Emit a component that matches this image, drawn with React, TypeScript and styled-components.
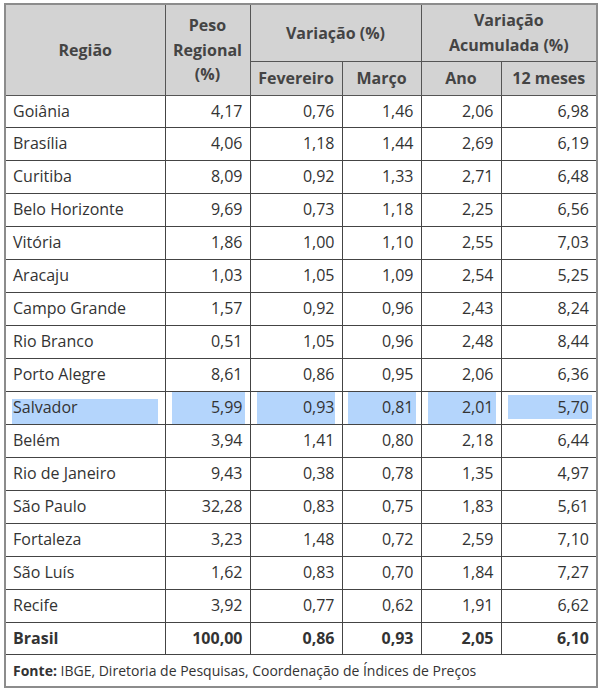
import React from "react";
import styled, { createGlobalStyle, css } from "styled-components";

const Global = createGlobalStyle`
  html, body { margin: 0; padding: 0; background: #fff; }
  body { font-family: "Open Sans", "Noto Sans", sans-serif; color: #333; }
`;

const Page = styled.div`
  padding: 3px 4px 0 4px;
`;

const Table = styled.table`
  width: 592px;
  table-layout: fixed;
  border-collapse: collapse;
  border: 2px solid #8c8c8c;
  font-size: 16px;
`;

const Th = styled.th<{ $h?: number }>`
  background: #d3d3d3;
  color: #444;
  font-weight: 700;
  font-size: 16px;
  line-height: 24.5px;
  text-align: center;
  vertical-align: middle;
  border: 1px solid #555;
  padding: 0 4px;
  height: ${(p) => (p.$h ? `${p.$h}px` : "auto")};
  box-sizing: border-box;
`;

type Inset = { t: number; b: number; l: number; r: number };

const Td = styled.td<{ $num?: boolean; $bold?: boolean; $sel?: Inset }>`
  border: 1px solid #444;
  padding: 4px 7px;
  line-height: 23.93px;
  text-align: ${(p) => (p.$num ? "right" : "left")};
  font-weight: ${(p) => (p.$bold ? 700 : 400)};
  color: #333;
  white-space: nowrap;
  vertical-align: middle;
  ${(p) =>
    p.$sel &&
    css`
      background-image: linear-gradient(#b4d5fc, #b4d5fc);
      background-repeat: no-repeat;
      background-origin: padding-box;
      background-position: ${p.$sel.l}px ${p.$sel.t}px;
      background-size: calc(100% - ${p.$sel.l + p.$sel.r}px)
        calc(100% - ${p.$sel.t + p.$sel.b}px);
    `}
`;

const Foot = styled.td`
  border: 1px solid #444;
  padding: 4px 7px 4px 7px;
  font-size: 14px;
  line-height: 23px;
  color: #333;
  white-space: nowrap;
`;

const B = styled.b`
  font-weight: 700;
`;

type Row = [string, string, string, string, string, string];

const rows: Row[] = [
  ["Goiânia", "4,17", "0,76", "1,46", "2,06", "6,98"],
  ["Brasília", "4,06", "1,18", "1,44", "2,69", "6,19"],
  ["Curitiba", "8,09", "0,92", "1,33", "2,71", "6,48"],
  ["Belo Horizonte", "9,69", "0,73", "1,18", "2,25", "6,56"],
  ["Vitória", "1,86", "1,00", "1,10", "2,55", "7,03"],
  ["Aracaju", "1,03", "1,05", "1,09", "2,54", "5,25"],
  ["Campo Grande", "1,57", "0,92", "0,96", "2,43", "8,24"],
  ["Rio Branco", "0,51", "1,05", "0,96", "2,48", "8,44"],
  ["Porto Alegre", "8,61", "0,86", "0,95", "2,06", "6,36"],
  ["Salvador", "5,99", "0,93", "0,81", "2,01", "5,70"],
  ["Belém", "3,94", "1,41", "0,80", "2,18", "6,44"],
  ["Rio de Janeiro", "9,43", "0,38", "0,78", "1,35", "4,97"],
  ["São Paulo", "32,28", "0,83", "0,75", "1,83", "5,61"],
  ["Fortaleza", "3,23", "1,48", "0,72", "2,59", "7,10"],
  ["São Luís", "1,62", "0,83", "0,70", "1,84", "7,27"],
  ["Recife", "3,92", "0,77", "0,62", "1,91", "6,62"],
];

const total: Row = ["Brasil", "100,00", "0,86", "0,93", "2,05", "6,10"];

const selInsets: Inset[] = [
  { t: 7, b: 0, l: 6, r: 7 },
  { t: 0, b: 0, l: 6, r: 5 },
  { t: 0, b: 0, l: 6, r: 7 },
  { t: 0, b: 0, l: 5, r: 5 },
  { t: 0, b: 0, l: 6, r: 5 },
  { t: 3, b: 5, l: 6, r: 4 },
];

export default function App() {
  return (
    <Page>
      <Global />
      <Table>
        <colgroup>
          <col style={{ width: 160 }} />
          <col style={{ width: 85 }} />
          <col style={{ width: 92 }} />
          <col style={{ width: 79 }} />
          <col style={{ width: 80 }} />
          <col style={{ width: 96 }} />
        </colgroup>
        <thead>
          <tr>
            <Th rowSpan={2}>Região</Th>
            <Th rowSpan={2}>
              Peso
              <br />
              Regional
              <br />
              (%)
            </Th>
            <Th colSpan={2} $h={57}>
              Variação (%)
            </Th>
            <Th colSpan={2} $h={57}>
              Variação
              <br />
              Acumulada (%)
            </Th>
          </tr>
          <tr>
            <Th $h={34}>Fevereiro</Th>
            <Th $h={34}>Março</Th>
            <Th $h={34}>Ano</Th>
            <Th $h={34}>12 meses</Th>
          </tr>
        </thead>
        <tbody>
          {rows.map((r) => {
            const sel = r[0] === "Salvador";
            return (
              <tr key={r[0]}>
                {r.map((v, i) => (
                  <Td key={i} $num={i > 0} $sel={sel ? selInsets[i] : undefined}>
                    {v}
                  </Td>
                ))}
              </tr>
            );
          })}
          <tr>
            {total.map((v, i) => (
              <Td key={i} $num={i > 0} $bold>
                {v}
              </Td>
            ))}
          </tr>
          <tr>
            <Foot colSpan={6}>
              <B>Fonte:</B> IBGE, Diretoria de Pesquisas, Coordenação de Índices de Preços
            </Foot>
          </tr>
        </tbody>
      </Table>
    </Page>
  );
}
